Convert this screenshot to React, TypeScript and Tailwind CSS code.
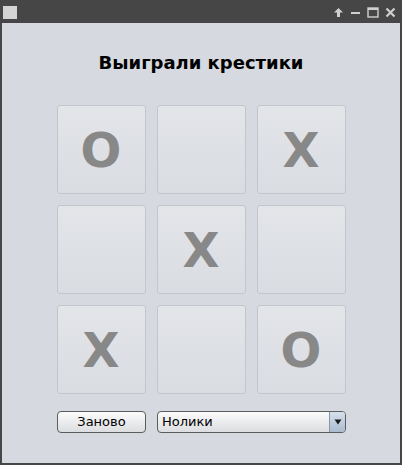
import React from "react";

const cells = ["O", "", "X", "", "X", "", "X", "", "O"];

export default function App() {
  return (
    <div
      className="w-[402px] h-[465px] bg-[#464646] flex flex-col px-[2px] pb-[2px] overflow-hidden"
      style={{ fontFamily: '"DejaVu Sans", sans-serif' }}
    >
      {/* title bar */}
      <div className="h-[23px] flex items-center shrink-0 relative">
        <div className="w-[14px] h-[13px] bg-[#d4d4d4] ml-[1px] mt-[1px]" />
        <div className="ml-auto flex items-center gap-[6px] mr-[4px] mt-[1px]">
          <svg width="11" height="11" viewBox="0 0 11 11">
            <path d="M5.5 1 L10 5.5 L7 5.5 L7 10 L4 10 L4 5.5 L1 5.5 Z" fill="#cfcfcf" />
          </svg>
          <svg width="11" height="11" viewBox="0 0 11 11">
            <rect x="1" y="5" width="9" height="2" fill="#cfcfcf" />
          </svg>
          <svg width="12" height="11" viewBox="0 0 12 11">
            <rect x="1" y="1" width="10" height="9" fill="none" stroke="#cfcfcf" strokeWidth="1.4" />
            <rect x="1" y="1" width="10" height="2" fill="#cfcfcf" />
          </svg>
          <svg width="11" height="11" viewBox="0 0 11 11">
            <path d="M1.5 1.5 L9.5 9.5 M9.5 1.5 L1.5 9.5" stroke="#cfcfcf" strokeWidth="2.2" />
          </svg>
        </div>
      </div>
      {/* content */}
      <div className="flex-1 bg-[#d6d9df] flex flex-col items-center">
        <div className="mt-[29px] h-[22px] text-[18px] font-bold text-black leading-[22px]">
          Выиграли крестики
        </div>
        <div className="mt-[31px] grid grid-cols-[89px_89px_89px] grid-rows-[89px_89px_89px] gap-[11px]">
          {cells.map((c, i) => (
            <div
              key={i}
              className="rounded-[3px] border border-[#c3c6cc] bg-gradient-to-b from-[#e3e5e9] to-[#d9dce1] flex items-center justify-center text-[48px] font-bold text-[#888888] leading-none"
            >
              {c}
            </div>
          ))}
        </div>
        <div className="mt-[17px] flex gap-[11px] ml-[1px]">
          <div className="w-[89px] h-[22px] rounded-[4px] border border-[#5c5c5c] bg-gradient-to-b from-[#fbfbfb] to-[#dcdde0] flex items-center justify-center text-[13px] text-black">
            Заново
          </div>
          <div className="w-[189px] h-[22px] rounded-[4px] border border-[#5c5c5c] bg-gradient-to-b from-[#fbfbfb] to-[#dcdde0] flex items-stretch overflow-hidden text-[13px] text-black">
            <div className="flex-1 flex items-center pl-[4px]">Нолики</div>
            <div className="w-[16px] border-l border-[#8a96a6] bg-gradient-to-b from-[#d6e0ec] to-[#a9bccf] flex items-center justify-center">
              <svg width="8" height="6" viewBox="0 0 8 6">
                <path d="M0.5 0.5 L7.5 0.5 L4 5.5 Z" fill="#1a1a1a" />
              </svg>
            </div>
          </div>
        </div>
      </div>
    </div>
  );
}
